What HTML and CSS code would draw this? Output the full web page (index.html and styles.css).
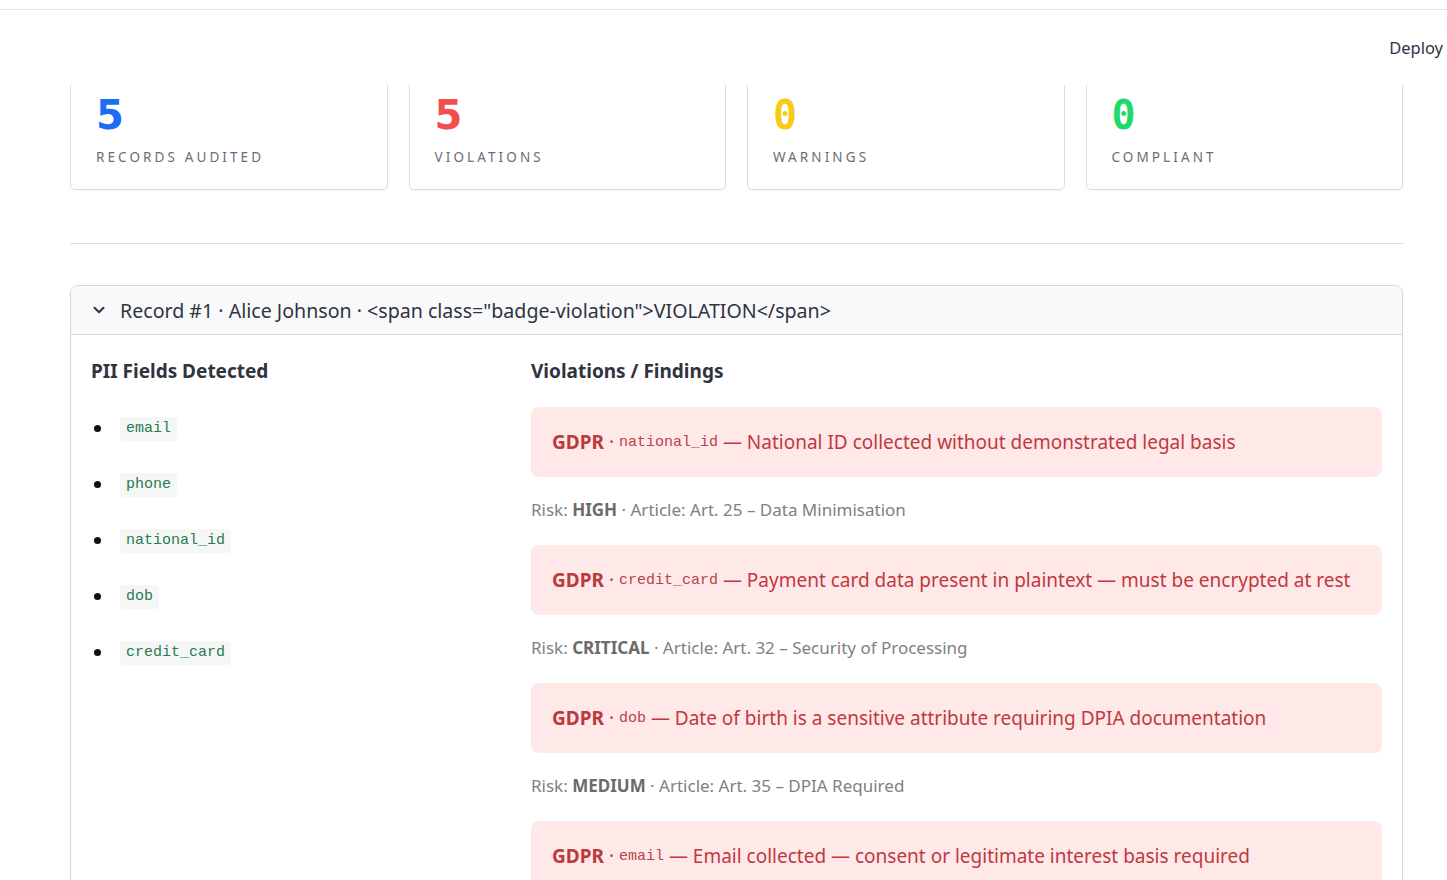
FILE: index.html
```html
<!DOCTYPE html>
<html lang="en">
<head>
<meta charset="utf-8">
<title>PII Audit</title>
<link rel="stylesheet" href="styles.css">
</head>
<body>
<header class="header">
  <div class="header-line"></div>
  <div class="header-bar"><span class="deploy">Deploy</span></div>
</header>
<main class="main">
  <section class="metrics">
    <div class="metric"><div class="metric-value blue">5</div><div class="metric-label">RECORDS AUDITED</div></div>
    <div class="metric"><div class="metric-value red">5</div><div class="metric-label">VIOLATIONS</div></div>
    <div class="metric"><div class="metric-value yellow mono">0</div><div class="metric-label">WARNINGS</div></div>
    <div class="metric"><div class="metric-value green mono">0</div><div class="metric-label">COMPLIANT</div></div>
  </section>
  <hr class="divider">
  <section class="expander">
    <div class="expander-head">
      <svg class="chevron" width="14" height="14" viewBox="0 0 14 14"><path d="M2.5 4.8 L7 9.2 L11.5 4.8" fill="none" stroke="#31333f" stroke-width="2" stroke-linecap="round" stroke-linejoin="round"/></svg>
      <span class="expander-title">Record #1 · Alice Johnson · &lt;span class="badge-violation"&gt;VIOLATION&lt;/span&gt;</span>
    </div>
    <div class="expander-body">
      <div class="col-left">
        <h3 class="col-title">PII Fields Detected</h3>
        <ul class="pii-list">
          <li><code class="pill">email</code></li>
          <li><code class="pill">phone</code></li>
          <li><code class="pill">national_id</code></li>
          <li><code class="pill">dob</code></li>
          <li><code class="pill">credit_card</code></li>
        </ul>
      </div>
      <div class="col-right">
        <h3 class="col-title">Violations / Findings</h3>
        <div class="finding"><b>GDPR</b> · <code class="fcode">national_id</code> — National ID collected without demonstrated legal basis</div>
        <p class="risk">Risk: <b>HIGH</b> · Article: Art. 25 – Data Minimisation</p>
        <div class="finding"><b>GDPR</b> · <code class="fcode">credit_card</code> — Payment card data present in plaintext — must be encrypted at rest</div>
        <p class="risk">Risk: <b>CRITICAL</b> · Article: Art. 32 – Security of Processing</p>
        <div class="finding"><b>GDPR</b> · <code class="fcode">dob</code> — Date of birth is a sensitive attribute requiring DPIA documentation</div>
        <p class="risk">Risk: <b>MEDIUM</b> · Article: Art. 35 – DPIA Required</p>
        <div class="finding"><b>GDPR</b> · <code class="fcode">email</code> — Email collected — consent or legitimate interest basis required</div>
        <p class="risk">Risk: <b>MEDIUM</b> · Article: Art. 6 – Lawful Basis</p>
      </div>
    </div>
  </section>
</main>
</body>
</html>
```

FILE: styles.css
```css
html, body {
  margin: 0;
  padding: 0;
  background: #ffffff;
  color: #31333f;
  font-family: "Noto Sans", "Open Sans", sans-serif;
}

.header {
  position: fixed;
  top: 0;
  left: 0;
  right: 0;
  height: 85px;
  background: #ffffff;
  z-index: 10;
}

.header-line {
  margin-top: 9px;
  height: 1px;
  background: #e3e3e3;
}

.header-bar {
  display: flex;
  justify-content: flex-end;
  padding-top: 26px;
}

.deploy {
  font-size: 16.5px;
  color: #31333f;
  margin-right: 4px;
  line-height: 24px;
}

.main {
  margin-left: 70px;
  width: 1333px;
  padding-top: 71px;
}

.metrics {
  display: grid;
  grid-template-columns: repeat(4, 1fr);
  gap: 21px;
}

.metric {
  border: 1px solid #dcdcdc;
  border-radius: 5px;
  padding: 19px 25px 22px;
  box-shadow: 0 1px 2px rgba(0,0,0,0.04);
}

.metric-value {
  font-family: "DejaVu Sans", sans-serif;
  font-weight: 700;
  font-size: 40px;
  line-height: 48px;
}

.metric-value.mono {
  font-family: "DejaVu Sans Mono", monospace;
}

.blue { color: #1a6ef5; }
.red { color: #f24e4e; }
.yellow { color: #f7cb15; }
.green { color: #1fd96b; }

.metric-label {
  margin-top: 8px;
  font-size: 13.5px;
  line-height: 20px;
  letter-spacing: 3.1px;
  color: #6b6d75;
}

.divider {
  border: 0;
  border-top: 1px solid #dddddd;
  margin: 53px 0 41px;
}

.expander {
  border: 1px solid #d6d6d9;
  border-radius: 8px;
  overflow: hidden;
}

.expander-head {
  display: flex;
  align-items: center;
  gap: 14px;
  height: 48px;
  padding-left: 21px;
  background: #f8f9fb;
  border-bottom: 1px solid #d6d6d9;
}

.expander-title {
  font-size: 19.6px;
  color: #31333f;
}

.expander-body {
  display: grid;
  grid-template-columns: 420px 1fr;
  gap: 20px;
  padding: 20px 20px 40px;
}

.col-title {
  margin: 0;
  font-size: 19px;
  font-weight: 700;
  line-height: 32px;
  color: #31333f;
}

.pii-list {
  list-style: none;
  margin: 30px 0 0;
  padding: 0;
}

.pii-list li {
  display: flex;
  height: 56px;
  align-items: flex-start;
}

.pii-list li::before {
  content: "";
  width: 7px;
  height: 7px;
  border-radius: 50%;
  background: #111;
  margin: 8px 19px 0 3px;
  flex: none;
}

.pill {
  display: inline-block;
  font-family: "Liberation Mono", monospace;
  font-size: 15px;
  line-height: 24px;
  padding: 0 6px;
  border-radius: 4px;
  background: #f5f7f6;
  color: #2c7a4f;
}

.finding {
  margin-top: 23px;
  background: #ffe8e8;
  border-radius: 8px;
  height: 70px;
  display: flex;
  align-items: center;
  padding-left: 21px;
  font-size: 19px;
  color: #c0393e;
  white-space: pre;
}

.col-title + .finding {
  margin-top: 20px;
}

.finding b {
  font-weight: 700;
  color: #bb3a3e;
}

.fcode {
  font-family: "Liberation Mono", monospace;
  font-size: 15px;
  color: #b84448;
}

.risk {
  margin: 0;
  padding-top: 21px;
  font-size: 17px;
  line-height: 24px;
  color: #808080;
}

.risk b {
  color: #6b6b6b;
}
```
